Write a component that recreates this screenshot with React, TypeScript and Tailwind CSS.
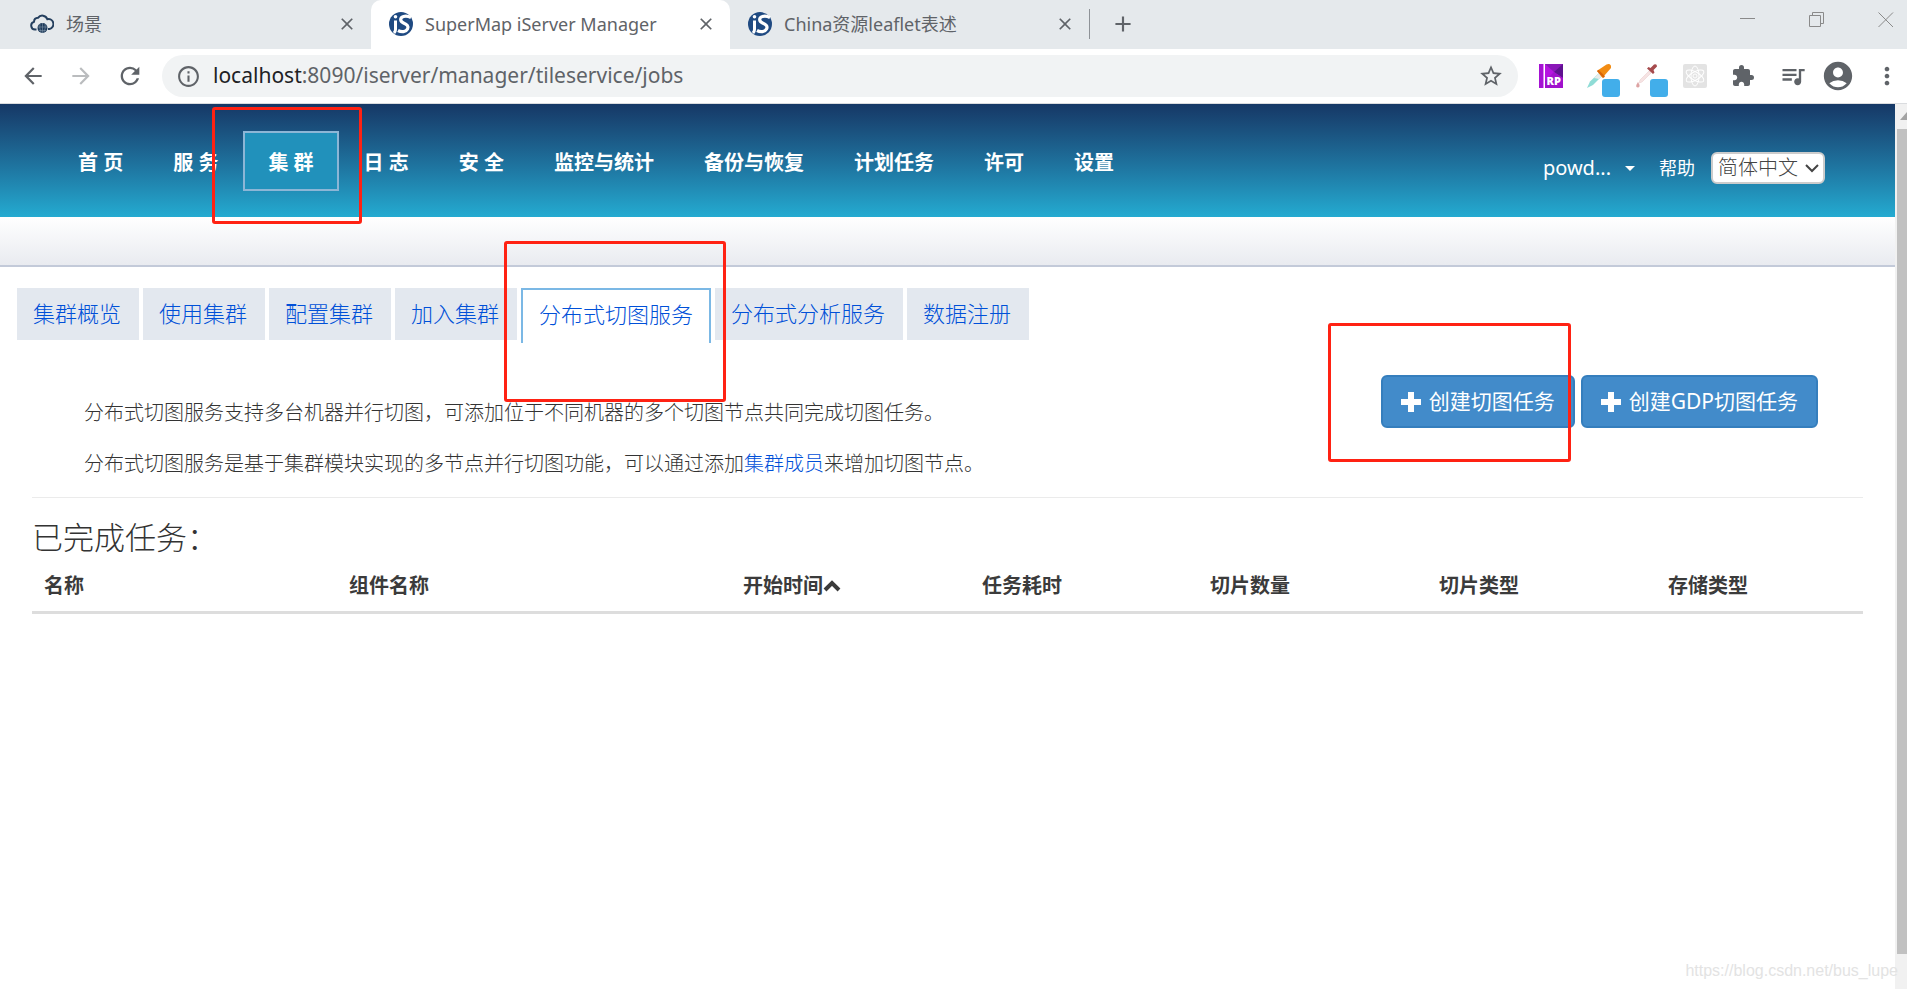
import React from 'react';
import {
  MdArrowBack, MdArrowForward, MdRefresh, MdInfoOutline, MdStarBorder, MdExtension,
  MdQueueMusic, MdAccountCircle, MdMoreVert, MdClose, MdAdd,
} from 'react-icons/md';

function CloudIcon() {
  return (
    <svg className="h-6 w-6 shrink-0" viewBox="0 0 24 24" fill="none">
      <path d="M6.500 17.500H5a4 4 0 0 1-1-7.800 4.200 4.200 0 0 1 4-3.900 5.300 5.300 0 0 1 9.300 1.400A5 5 0 0 1 19.500 17h-1.500" stroke="#243f5e" strokeWidth="2" />
      <circle cx="12.500" cy="16" r="5" fill="#1d3a5a" />
      <path d="M8 15h9M9 18.500h7M12.500 11v10M10 12q-1 4 1 8M15 12q1 4-1 8" stroke="#7f93a8" strokeWidth="0.600" />
    </svg>
  );
}

function IServerIcon() {
  return (
    <svg className="h-6 w-6 shrink-0" viewBox="0 0 24 24" fill="none">
      <circle cx="12" cy="12" r="12" fill="#1f4a82" />
      <circle cx="6.500" cy="4.800" r="1.800" fill="#fff" />
      <path d="M6.500 8.500v9q0 2-1.500 3.500" stroke="#fff" strokeWidth="3" />
      <path d="M22 5.500q-4-2-7.500-1c-4 1.200-3.500 5 0 6.500s5.500 3 4 6-6 3.500-9.500 1.500" stroke="#fff" strokeWidth="3.200" />
    </svg>
  );
}

function RpIcon() {
  return (
    <svg className="h-6 w-6" viewBox="0 0 24 24">
      <rect width="24" height="24" rx="1" fill="#b514e0" />
      <path d="M6 0h18v14L15 8z" fill="#8a17b8" />
      <path d="M15 8 24 0v14z" fill="#5f1290" />
      <path d="M6 24h18V14l-9-6-9 9z" fill="#a011cc" />
      <path d="M0 0h4v24H0z" fill="#a512d3" />
      <path d="M4.500 0H6v24H4.500z" fill="#fff" />
      <text x="7.500" y="21" fontSize="11" fontWeight="800" fill="#fff" fontFamily="Open Sans, sans-serif">RP</text>
    </svg>
  );
}

function DropperIcon({ faded = false }: { faded?: boolean }) {
  return (
    <svg className="h-6 w-6" viewBox="0 0 24 24">
      {faded ? (
        <>
          <path d="M14 7 5 16l-1 3 3-1 9-9z" fill="#f6e4e4" stroke="#ecd0d0" strokeWidth="0.600" />
          <path d="M12 4.500 13.500 3l2 1L19 .5q3-1 3 2L18.500 6l1 2.500L18 10z" fill="#a64b4d" />
          <path d="M3 18q2 3 1.500 4.500a1.800 1.800 0 0 1-3.300 0Q1 21 3 18z" fill="#dda3a3" />
        </>
      ) : (
        <>
          <path d="M12 9 3 17.500 0 24l6-3 9-9z" fill="#8fdcd6" />
          <path d="m12 9-5 5 5 1 3-3z" fill="#e8eceb" />
          <path d="M10 7l2-1.500L19.500.500q3-1 4 .5t.5 3L17 12l-1.500 2z" fill="#f28c13" />
          <path d="m10 7 1.500-1.200 6.500 6.500-1.500 1.700z" fill="#d9650a" />
        </>
      )}
    </svg>
  );
}

function AtomIcon() {
  return (
    <svg className="h-6 w-6" viewBox="0 0 24 24" fill="none" stroke="#fff">
      <rect width="24" height="24" rx="2" fill="#e3e3e3" stroke="none" />
      <ellipse cx="12" cy="12" rx="4" ry="10" />
      <ellipse cx="12" cy="12" rx="4" ry="10" transform="rotate(60 12 12)" />
      <ellipse cx="12" cy="12" rx="4" ry="10" transform="rotate(120 12 12)" />
      <circle cx="12" cy="12" r="2" />
    </svg>
  );
}

function Badge() {
  return <span className="absolute top-[15px] left-[15px] h-[18px] w-[18px] rounded-[3px] bg-[#42aeea]" />;
}

function BrowserTab({ icon, title, active = false }: { icon: React.ReactNode; title: string; active?: boolean }) {
  return (
    <div
      className={
        active
          ? 'flex h-full w-[359px] items-center rounded-t-[10px] bg-white pr-[14px] pb-[2px] pl-[18px]'
          : 'flex h-full w-[359px] items-center pr-[14px] pb-[2px] pl-[18px]'
      }
    >
      {icon}
      <span className="ml-3 flex-1 truncate text-lg text-[#5f6368]">{title}</span>
      <button aria-label="关闭标签页" className="text-[#5f6368]"><MdClose size={20} /></button>
    </div>
  );
}

function BrowserChrome() {
  return (
    <header>
      <div className="flex h-[49px] bg-[#e5e9ec] text-[#5f6368]">
        <div className="w-3 shrink-0" />
        <BrowserTab icon={<CloudIcon />} title="场景" />
        <BrowserTab icon={<IServerIcon />} title="SuperMap iServer Manager" active />
        <BrowserTab icon={<IServerIcon />} title="China资源leaflet表述" />
        <div className="flex items-center gap-5 pb-[2px]">
          <span className="h-[30px] w-px bg-[#8e9297]" />
          <button aria-label="新标签页"><MdAdd size={26} /></button>
        </div>
        <div className="ml-auto flex items-start gap-[53px] pt-3 pr-[13px] text-[#8a8a8a]">
          <button aria-label="最小化">
            <svg className="h-4 w-4" viewBox="0 0 16 16" stroke="currentColor"><path d="M0 6.500h15" /></svg>
          </button>
          <button aria-label="还原">
            <svg className="h-4 w-4" viewBox="0 0 16 16" stroke="currentColor" fill="none"><path d="M.5 3.500h11v11H.5zM3.500 3.500v-3h11v11h-3" /></svg>
          </button>
          <button aria-label="关闭">
            <svg className="h-4 w-4" viewBox="0 0 16 16" stroke="currentColor"><path d="m.5.5 14.500 14.500M15 .5.500 15" /></svg>
          </button>
        </div>
      </div>
      <div className="flex h-[55px] items-center border-b border-[#dadcdf] bg-white pr-[6px] pl-5 text-[#5f6368]">
        <div className="flex gap-[22px]">
          <button aria-label="后退"><MdArrowBack size={26} /></button>
          <button aria-label="前进" className="text-[#babcbe]"><MdArrowForward size={26} /></button>
          <button aria-label="重新加载"><MdRefresh size={28} /></button>
        </div>
        <div className="ml-[18px] flex h-[42px] flex-1 items-center rounded-full bg-[#f1f3f4] px-[14px]">
          <MdInfoOutline size={25} />
          <a href="#address" className="ml-3 flex-1 text-[21px]">
            <span className="text-[#202124]">localhost</span>:8090/iserver/manager/tileservice/jobs
          </a>
          <button aria-label="收藏"><MdStarBorder size={26} /></button>
        </div>
        <div className="ml-[21px] flex items-center gap-6">
          <button aria-label="RP"><RpIcon /></button>
          <button aria-label="取色器" className="relative"><DropperIcon /><Badge /></button>
          <button aria-label="滴管" className="relative"><DropperIcon faded /><Badge /></button>
          <button aria-label="React"><AtomIcon /></button>
          <button aria-label="扩展程序"><MdExtension size={24} /></button>
          <button aria-label="媒体控制"><MdQueueMusic size={28} /></button>
        </div>
        <div className="ml-[14px] flex items-center gap-[18px]">
          <button aria-label="帐号"><MdAccountCircle size={34} /></button>
          <button aria-label="菜单"><MdMoreVert size={28} /></button>
        </div>
      </div>
    </header>
  );
}

const navItems = ['首 页', '服 务', '集 群', '日 志', '安 全', '监控与统计', '备份与恢复', '计划任务', '许可', '设置'];

function MainNav() {
  return (
    <div className="flex h-[113px] items-center justify-between bg-linear-to-b from-[#163866] via-[#1f7aa5] via-60% to-[#24abd1] pt-px pr-[70px] pl-[53px]">
      <nav className="flex items-center">
        {navItems.map((item) =>
          item === '集 群' ? (
            <a key={item} href="#cluster" className="relative flex h-[60px] items-center border-2 border-[#8cb6d6] bg-[#2191bb] px-[23px] pt-1 text-xl font-bold whitespace-nowrap text-white">
              {item}
              <span className="pointer-events-none absolute -top-[26px] -right-[25px] -bottom-[35px] -left-[33px] z-10 rounded-[3px] border-[3px] border-[#ff2213]" />
            </a>
          ) : (
            <a key={item} href="#nav" className="flex h-[60px] items-center px-[25px] pt-1 text-xl font-bold whitespace-nowrap text-white">
              {item}
            </a>
          ),
        )}
      </nav>
      <div className="flex items-center pt-[14px] text-white">
        <button className="flex items-center text-xl">
          powd...
          <span className="ml-[14px] h-0 w-0 border-x-[5px] border-t-[5px] border-x-transparent border-t-white" />
        </button>
        <a href="#help" className="ml-6 text-lg">帮助</a>
        <div className="relative ml-4 flex items-center">
          <select aria-label="语言" className="h-8 w-[114px] appearance-none rounded-md border-2 border-[#cccccc] bg-white pl-[5px] text-xl leading-7 font-light text-[#444444]">
            <option>简体中文</option>
          </select>
          <svg className="pointer-events-none absolute right-[6px] h-[14px] w-[14px]" viewBox="0 0 14 14" fill="none" stroke="#444" strokeWidth="2"><path d="m1 4 6 6 6-6" /></svg>
        </div>
      </div>
    </div>
  );
}

const tabs = ['集群概览', '使用集群', '配置集群', '加入集群', '分布式切图服务', '分布式分析服务', '数据注册'];

function SubTabs() {
  return (
    <nav className="flex h-[55px] items-start gap-1 pl-[17px] text-[22px] font-light text-[#0050d8]">
      {tabs.map((tab) =>
        tab === '分布式切图服务' ? (
          <a key={tab} href="#jobs" className="relative flex h-[55px] items-center border-2 border-b-0 border-[#7bb8e5] bg-white px-4 pb-1 whitespace-nowrap">
            {tab}
            <span className="pointer-events-none absolute -top-[49px] -right-[17px] -bottom-[59px] -left-[19px] z-10 rounded-[3px] border-[3px] border-[#ff2213]" />
          </a>
        ) : (
          <a key={tab} href="#tab" className="flex h-[52px] items-center bg-[#e3e8ef] pr-[18px] pb-[2px] pl-4 whitespace-nowrap">
            {tab}
          </a>
        ),
      )}
    </nav>
  );
}

function PlusIcon() {
  return (
    <svg className="h-5 w-5" viewBox="0 0 20 20" fill="#fff"><path d="M7 0h6v7h7v6h-7v7H7v-7H0V7h7z" /></svg>
  );
}

function CreateButton({ label }: { label: string }) {
  return (
    <button className="flex h-[53px] items-center gap-2 rounded-md border-2 border-[#357ebd] bg-[#428bca] px-[18px] text-[21px] whitespace-nowrap text-white">
      <PlusIcon />
      {label}
    </button>
  );
}

function JobsTable() {
  return (
    <table className="w-full table-fixed border-b-[3px] border-[#dddddd] text-left text-xl text-[#3b3b3b]">
      <colgroup>
        <col className="w-[305px]" />
        <col className="w-[394px]" />
        <col className="w-[239px]" />
        <col className="w-[228px]" />
        <col className="w-[229px]" />
        <col className="w-[229px]" />
        <col />
      </colgroup>
      <thead>
        <tr className="h-[50px]">
          <th className="pl-3">名称</th>
          <th className="pl-3">组件名称</th>
          <th className="pl-3">
            <span className="flex items-center">
              开始时间
              <svg className="h-[14px] w-[18px]" viewBox="0 0 18 14" fill="none" stroke="#3b3b3b" strokeWidth="4"><path d="m2 11 7-7 7 7" /></svg>
            </span>
          </th>
          <th className="pl-3">任务耗时</th>
          <th className="pl-3">切片数量</th>
          <th className="pl-3">切片类型</th>
          <th className="pl-3">存储类型</th>
        </tr>
      </thead>
    </table>
  );
}

export default function App() {
  return (
    <div className='flex min-h-screen flex-col bg-white font-["Noto_Sans","Noto_Sans_CJK_SC",sans-serif]'>
      <BrowserChrome />
      <div className="flex flex-1">
        <div className="relative min-w-0 flex-1">
          <MainNav />
          <div className="h-[50px] border-b-2 border-[#c3cad9] bg-linear-to-b from-white to-[#e9ebf0]" />
          <div className="pt-[21px]"><SubTabs /></div>
          <main className="px-8">
            <div className="flex items-start justify-between border-b border-[#ebebeb] pt-8 pr-[45px] pb-2 pl-[52px]">
              <div className="pt-3 text-xl leading-[51px] font-light text-[#333333]">
                <p>分布式切图服务支持多台机器并行切图，可添加位于不同机器的多个切图节点共同完成切图任务。</p>
                <p>
                  分布式切图服务是基于集群模块实现的多节点并行切图功能，可以通过添加
                  <a href="#members" className="text-[#0050d8]">集群成员</a>来增加切图节点。
                </p>
              </div>
              <div className="relative flex gap-[6px]">
                <CreateButton label="创建切图任务" />
                <CreateButton label="创建GDP切图任务" />
                <span className="pointer-events-none absolute -top-[52px] -left-[53px] h-[139px] w-[243px] rounded-[3px] border-[3px] border-[#ff2213]" />
              </div>
            </div>
            <h2 className="pt-[14px] text-[31px] leading-[50px] font-light text-[#333333]">已完成任务：</h2>
            <JobsTable />
          </main>
          <p className="absolute -right-[3px] bottom-[6px] font-['Liberation_Sans',sans-serif] text-base text-[#e3e3e3]">https://blog.csdn.net/bus_lupe</p>
        </div>
        <div className="flex w-3 flex-col overflow-hidden bg-[#f1f1f1] pb-[35px] pl-[2px]">
          <svg className="h-[25px] w-5 shrink-0" viewBox="0 0 20 25" fill="#a3a3a3"><path d="M3 16 10 8l7 8z" /></svg>
          <div className="flex-1 bg-[#c1c1c1]" />
        </div>
      </div>
    </div>
  );
}
